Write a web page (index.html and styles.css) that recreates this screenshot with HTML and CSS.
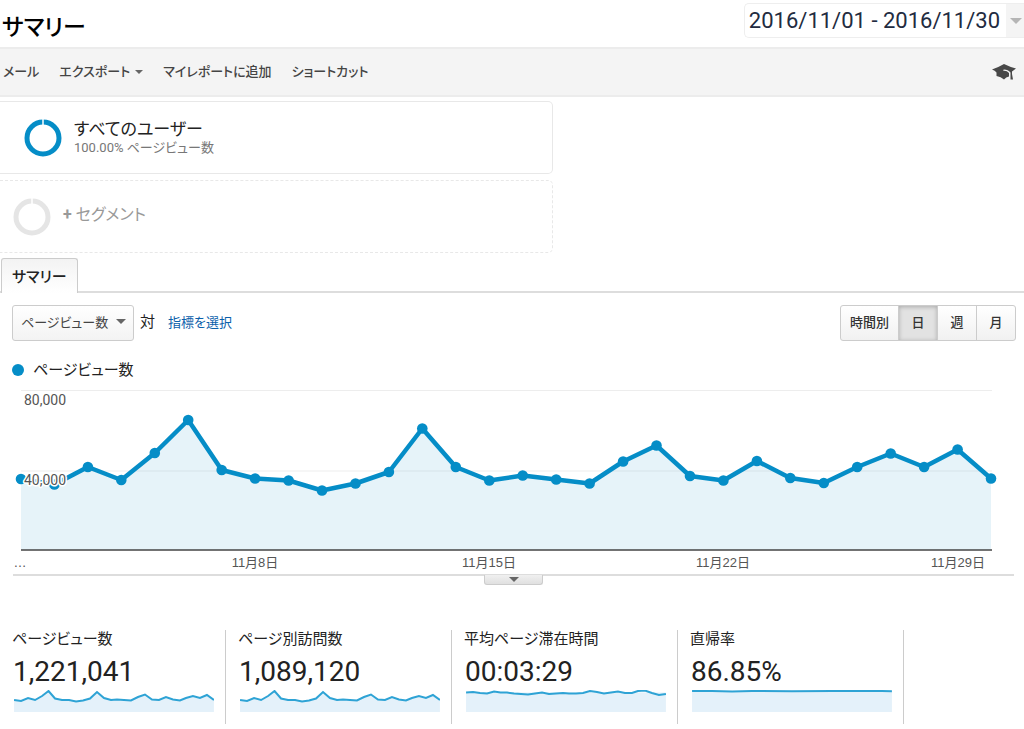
FILE: index.html
```html
<!DOCTYPE html>
<html lang="ja">
<head>
<meta charset="utf-8">
<title>サマリー</title>
<link rel="stylesheet" href="styles.css">
</head>
<body>
<header class="page-header">
  <h1 class="page-title">サマリー</h1>
  <button class="date-range" type="button"><span class="date-text">2016/11/01 - 2016/11/30</span><span class="date-toggle"><span class="caret caret-large"></span></span></button>
</header>

<nav class="toolbar">
  <button class="tool" type="button">メール</button>
  <button class="tool" type="button">エクスポート<span class="caret caret-small"></span></button>
  <button class="tool" type="button">マイレポートに追加</button>
  <button class="tool" type="button">ショートカット</button>
  <button class="tool help" type="button" aria-label="ヘルプ">
    <svg width="24" height="16" viewBox="0 0 24 16"><path fill="#484848" d="M0 5.500Q6 3.500 12 0 18 3 24 4.500L20 7.500V10l1 5.500h-2.500L18.500 8.500Q16 5.500 12 5.500q-1.500.500-.500 1.200Q15 6.500 17 9v3.500Q14 13 12 15.500 9 12.500 4.500 12V8.500Q3 6.500 0 5.500z"/></svg>
  </button>
</nav>

<section class="segments">
  <button class="segment" type="button">
    <svg class="ring" width="38" height="38" viewBox="0 0 38 38"><circle cx="19" cy="19" r="16" fill="none" stroke="#058dc7" stroke-width="5"/><path d="M19 0v6" stroke="#fff" stroke-width="1.500"/></svg>
    <span class="segment-text"><span class="segment-name">すべてのユーザー</span><span class="segment-detail">100.00% ページビュー数</span></span>
  </button>
  <button class="segment segment-add" type="button">
    <svg class="ring" width="38" height="38" viewBox="0 0 38 38"><circle cx="19" cy="19" r="16" fill="none" stroke="#e5e5e5" stroke-width="5"/><path d="M19 0v6" stroke="#fff" stroke-width="1.500"/></svg>
    <span class="add-label"><b>+</b> セグメント</span>
  </button>
</section>

<div class="tabs"><button class="tab" type="button">サマリー</button></div>

<main class="report">
  <div class="controls">
    <button class="metric" type="button">ページビュー数<span class="caret"></span></button>
    <span class="versus">対</span>
    <a class="choose" href="#">指標を選択</a>
    <div class="periods">
      <button class="period" type="button">時間別</button>
      <button class="period active" type="button">日</button>
      <button class="period" type="button">週</button>
      <button class="period" type="button">月</button>
    </div>
  </div>
  <div class="legend"><span class="dot"></span>ページビュー数</div>

  <svg class="chart" viewBox="0 385 1024 189" role="img" aria-label="ページビュー数">
    <defs><marker id="point" markerUnits="userSpaceOnUse" markerWidth="12" markerHeight="12" refX="6" refY="6"><circle cx="6" cy="6" r="5.300" fill="#058dc7"/></marker></defs>
    <path class="grid" d="M21 390.500H992M21 471H992"/>
    <path class="area" d="M21 550V479L54.400 484.500 87.900 467 121.300 480 154.800 453 188.200 420 221.700 470 255.100 478.500 288.600 480.500 322 490.500 355.500 483.500 388.900 472 422.300 428.500 455.800 467 489.300 480.500 522.700 475.500 556.200 479.500 589.600 483.500 623.100 461.500 656.500 445.500 690 476 723.400 480.500 756.900 461 790.300 478 823.800 483 857.200 467 890.700 453.500 924.100 467 957.600 449.500 991 478.500V550Z"/>
    <path class="line" d="M21 479L54.400 484.500 87.900 467 121.300 480 154.800 453 188.200 420 221.700 470 255.100 478.500 288.600 480.500 322 490.500 355.500 483.500 388.900 472 422.300 428.500 455.800 467 489.300 480.500 522.700 475.500 556.200 479.500 589.600 483.500 623.100 461.500 656.500 445.500 690 476 723.400 480.500 756.900 461 790.300 478 823.800 483 857.200 467 890.700 453.500 924.100 467 957.600 449.500 991 478.500"/>
    <path class="axis" d="M21 550H992"/>
    <g class="y-labels"><text x="24" y="405">80,000</text><text x="24" y="485">40,000</text></g>
    <g class="x-labels"><text x="20" y="567">…</text><text x="255" y="567">11月8日</text><text x="489" y="567">11月15日</text><text x="723" y="567">11月22日</text><text x="958" y="567">11月29日</text></g>
  </svg>
  <div class="divider"><button class="handle" type="button" aria-label="開く"><span class="caret"></span></button></div>

  <section class="stats">
    <article class="stat">
      <h2 class="stat-name">ページビュー数</h2>
      <p class="stat-value">1,221,041</p>
      <svg class="spark" viewBox="0 0 200 22"><path class="spark-area" d="M0 22V10L7 11 14 8 21 10 28 6 34.500 1 41 8.500 48 10 55 10 62 11.500 69 10.500 76 8.500 83 2 90 8 97 10 103 9.500 110 10 117 10.500 124 7 131 4.500 138 9.500 145 10 152 7 159 9.500 166 10.500 172 8 179 6 186 8 193 5 200 10V22Z"/><path class="spark-line" d="M0 10L7 11 14 8 21 10 28 6 34.500 1 41 8.500 48 10 55 10 62 11.500 69 10.500 76 8.500 83 2 90 8 97 10 103 9.500 110 10 117 10.500 124 7 131 4.500 138 9.500 145 10 152 7 159 9.500 166 10.500 172 8 179 6 186 8 193 5 200 10"/></svg>
    </article>
    <article class="stat">
      <h2 class="stat-name">ページ別訪問数</h2>
      <p class="stat-value">1,089,120</p>
      <svg class="spark" viewBox="0 0 200 22"><path class="spark-area" d="M0 22V10L7 11 14 8 21 10 28 6 34.500 1 41 8.500 48 10 55 10 62 11.500 69 10.500 76 8.500 83 2 90 8 97 10 103 9.500 110 10 117 10.500 124 7 131 4.500 138 9.500 145 10 152 7 159 9.500 166 10.500 172 8 179 6 186 8 193 5 200 10V22Z"/><path class="spark-line" d="M0 10L7 11 14 8 21 10 28 6 34.500 1 41 8.500 48 10 55 10 62 11.500 69 10.500 76 8.500 83 2 90 8 97 10 103 9.500 110 10 117 10.500 124 7 131 4.500 138 9.500 145 10 152 7 159 9.500 166 10.500 172 8 179 6 186 8 193 5 200 10"/></svg>
    </article>
    <article class="stat">
      <h2 class="stat-name">平均ページ滞在時間</h2>
      <p class="stat-value">00:03:29</p>
      <svg class="spark" viewBox="0 0 200 22"><path class="spark-area" d="M0 22V2.500H200V22Z"/><path class="spark-line" d="M0 2.500L7 2 14 3 21 3.500 28 1.500 34.500 2.500 41 2.500 48 3.500 55 4 62 4.500 69 3.500 76 2.500 83 4 90 3.500 97 3 103 3.500 110 3.500 117 3 124 1 131 2 138 3.500 145 2.500 152 1.500 159 3 166 3 172 1 179 .500 186 3 193 5 200 4"/></svg>
    </article>
    <article class="stat">
      <h2 class="stat-name">直帰率</h2>
      <p class="stat-value">86.85%</p>
      <svg class="spark" viewBox="0 0 200 22"><path class="spark-area" d="M0 22V1H200V22Z"/><path class="spark-line" d="M0 1L20 1 40 1.500 60 1 100 1.300 140 1 180 .800 200 1.200"/></svg>
    </article>
  </section>
</main>
</body>
</html>
```

FILE: styles.css
```css
* { box-sizing: border-box; }
body {
  margin: 0;
  background: #fff;
  color: #222;
  font-family: Roboto, "Noto Sans CJK JP", sans-serif;
  font-size: 13px;
  font-feature-settings: "palt";
}
button { margin: 0; padding: 0; border: 0; background: none; color: inherit; font: inherit; font-feature-settings: inherit; white-space: nowrap; }
h1, h2, p { margin: 0; }
svg { display: block; }
.caret { display: inline-block; border: 5px solid transparent; border-top-color: #666; border-bottom: 0; }
.caret-large { border-width: 6px 6px 0; border-top-color: #b5b5b5; }
.caret-small { border-width: 4px 4px 0; }

.page-header { display: flex; justify-content: space-between; height: 47px; padding: 3px 0 0 2px; }
.page-title { color: #000; font-size: 23px; font-weight: 500; line-height: 50px; }
.date-range { display: flex; height: 35px; border: 1px solid #eee; border-right: 0; border-radius: 5px 0 0 5px; color: #222b40; font-size: 22px; line-height: 33px; }
.date-text { padding: 0 6px 0 4px; }
.date-toggle { display: flex; align-items: center; width: 18px; padding-left: 4px; overflow: hidden; background: #f4f4f4; }

.toolbar { display: flex; align-items: center; gap: 20px; height: 50px; padding: 0 8px 0 3px; background: #f4f4f4; border: solid #ececec; border-width: 2px 0; color: #444; }
.tool { display: flex; align-items: center; gap: 5px; font-weight: 500; line-height: 20px; }
.help { margin-left: auto; }

.segments { display: grid; gap: 6px; width: 54%; padding-top: 4px; }
.segment { display: flex; align-items: center; gap: 12px; height: 73px; padding-left: 24px; border: 1px solid #e8e8e8; border-left: 0; border-radius: 0 5px 5px 0; text-align: left; }
.segment-text { display: grid; padding-top: 1px; }
.segment-name { color: #222; font-size: 17px; line-height: 20px; }
.segment-detail { color: #777; font-size: 13px; line-height: 18px; }
.segment-add { padding-left: 13px; border-style: dashed; color: #999; font-size: 16px; }
.add-label { padding-bottom: 8px; }

.tabs { display: flex; margin-top: 5px; padding-left: 1px; border-bottom: 2px solid #ddd; }
.tab { height: 35px; margin-bottom: -2px; padding: 0 10px 2px; border: 1px solid #ccc; border-bottom: 0; border-radius: 3px 3px 0 0; background: linear-gradient(#f3f3f3, #fff); font-size: 15px; font-weight: 500; }

.controls { display: flex; align-items: center; margin-top: 12px; padding: 0 8px 0 12px; }
.metric { display: flex; align-items: center; justify-content: space-between; width: 122px; height: 36px; padding: 0 7px 3px 8px; border: 1px solid #ccc; border-radius: 3px; background: linear-gradient(#fff, #f3f3f3); color: #444; }
.versus { margin-left: 6px; padding-bottom: 6px; font-size: 15px; }
.choose { margin-left: 13px; padding-bottom: 3px; color: #0b60aa; text-decoration: none; }
.periods { display: flex; height: 36px; margin-left: auto; border: 1px solid #ccc; border-radius: 3px; background: linear-gradient(#fff, #f1f1f1); color: #333; font-weight: 500; }
.period { width: 39px; padding-bottom: 3px; border-left: 1px solid #ccc; }
.period:first-child { width: 57px; border-left: 0; }
.active { background: #e2e2e2; box-shadow: inset 0 1px 4px #aaa; }

.legend { display: flex; align-items: center; gap: 9px; padding: 17px 0 3px 12px; font-size: 15px; line-height: 24px; }
.dot { width: 12px; height: 12px; border-radius: 50%; background: #058dc7; }
.chart { width: 100%; }
.grid { fill: none; stroke: #ededed; }
.area { fill: #058dc7; fill-opacity: .1; }
.line { fill: none; stroke: #058dc7; stroke-width: 4.500px; stroke-linejoin: round; marker: url(#point); }
.axis { stroke: #444; stroke-width: 1.500px; }
.y-labels, .x-labels { fill: #555; font-family: "Liberation Sans", "Noto Sans CJK JP", sans-serif; font-size: 13px; font-feature-settings: normal; }
.y-labels { font-family: Roboto, sans-serif; font-size: 14px; stroke: #fff; stroke-width: 3px; stroke-linejoin: round; paint-order: stroke; }
.x-labels { text-anchor: middle; }
.divider { display: flex; justify-content: center; align-items: flex-start; height: 55px; margin: 0 10px 0 13px; border-top: 2px solid #ddd; }
.handle { display: flex; justify-content: center; width: 59px; height: 10px; margin-top: -1px; padding-top: 2px; border: 1px solid #ccc; border-top: 0; border-radius: 0 0 3px 3px; background: linear-gradient(#f0f0f0, #e0e0e0); }

.stats { display: grid; grid-template-columns: repeat(4, 22.070%); padding-top: 1px; }
.stat { height: 94px; padding: 0 11px 0 12px; border-right: 1px solid #ccc; }
.stat-name { font-size: 15px; font-weight: 400; line-height: 18px; }
.stat-value { height: 42px; padding-left: 1px; font-size: 28px; line-height: 48px; }
.spark { width: 100%; padding-left: 2px; }
.spark-area { fill: #e4f1fa; }
.spark-line { fill: none; stroke: #2ea3d5; stroke-width: 2px; }
```
